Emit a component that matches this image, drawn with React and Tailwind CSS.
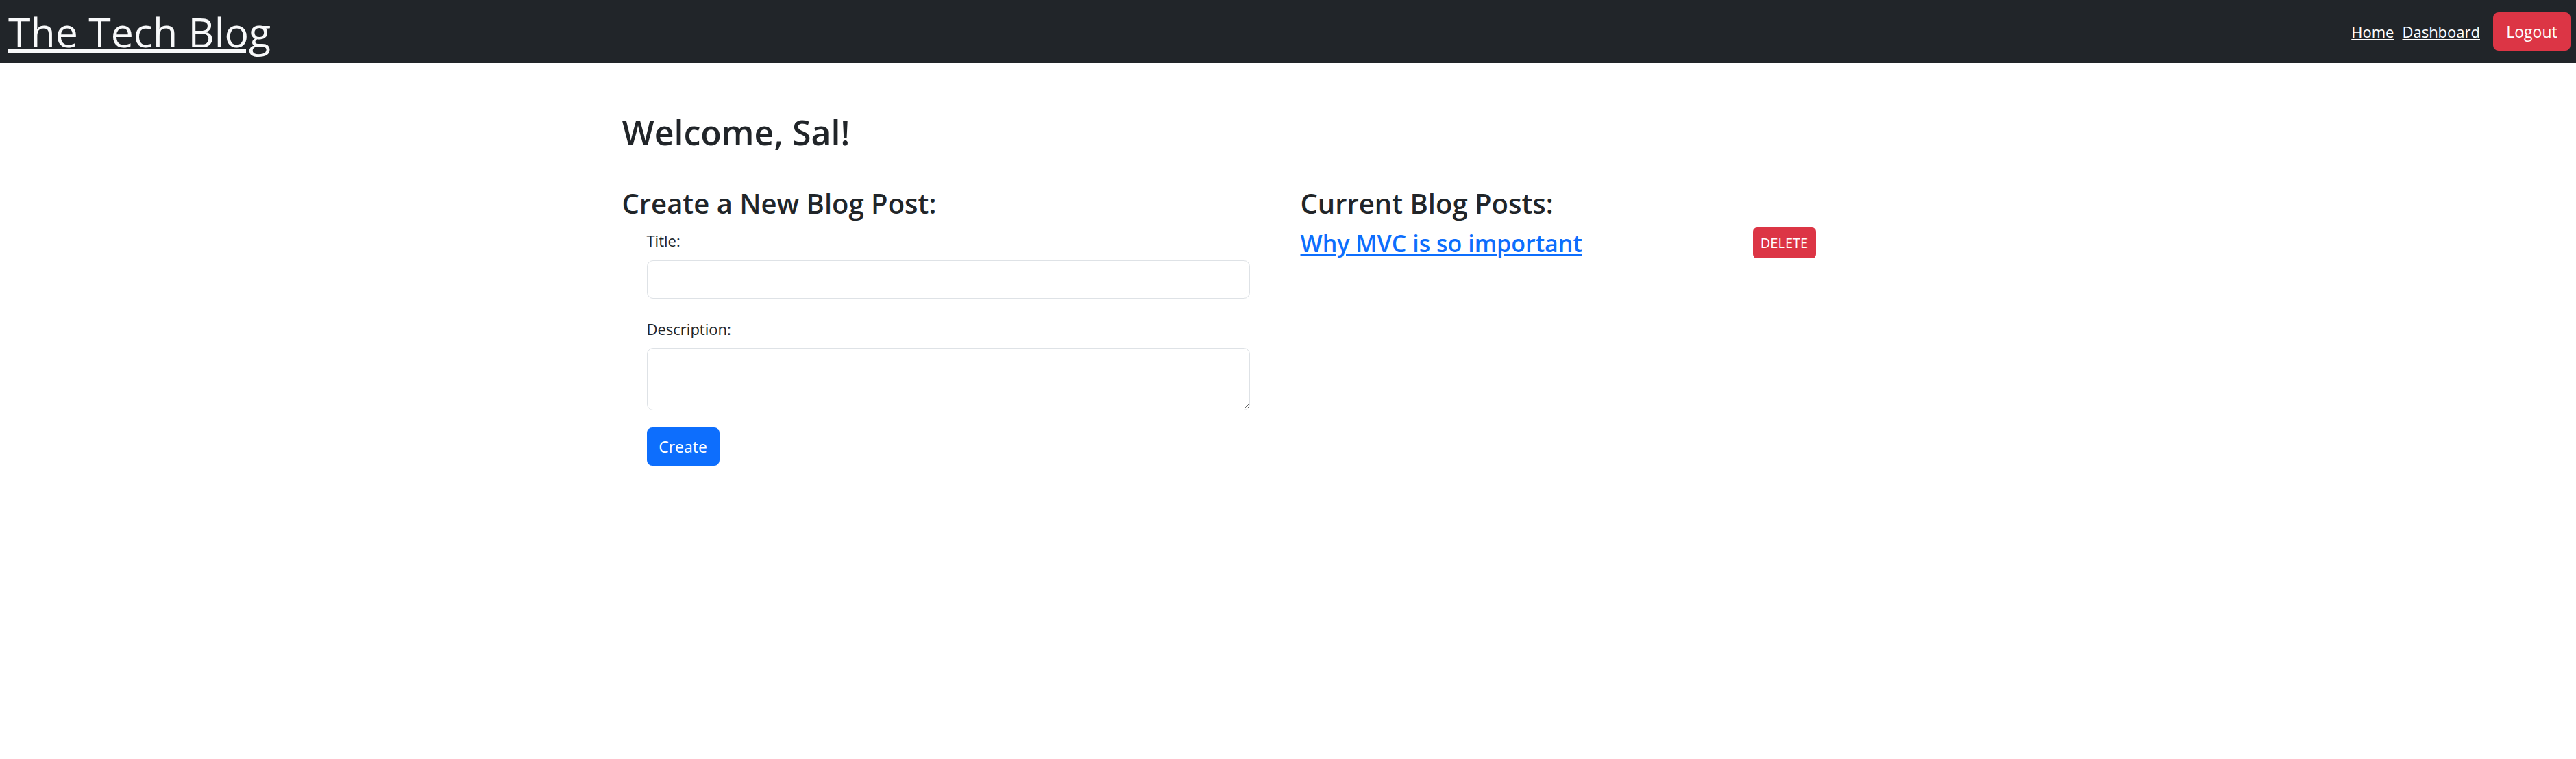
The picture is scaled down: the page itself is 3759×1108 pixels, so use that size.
export default function App() {
  return (
    <div className="min-h-screen bg-white font-['Open_Sans',sans-serif] text-[#212529]">
      <nav className="flex h-[92px] items-center justify-between bg-[#212529] pl-[12px] pr-[8px]">
        <a
          href="#"
          className="text-[59px] leading-none text-[#f8f9fa] underline decoration-[5px] underline-offset-[3px]"
        >
          The Tech Blog
        </a>
        <div className="flex items-center">
          <a href="#" className="mr-[12px] text-[22px] leading-none text-white underline">
            Home
          </a>
          <a href="#" className="mr-[19px] text-[22px] leading-none text-white underline">
            Dashboard
          </a>
          <button className="h-[56px] w-[113px] rounded-[8px] bg-[#dc3545] text-[23px] leading-none text-white">
            Logout
          </button>
        </div>
      </nav>

      <main className="mx-auto grid w-[1980px] grid-cols-2 pt-[75.5px]">
        <h2 className="col-span-2 px-[18px] text-[50px] font-semibold leading-none">Welcome, Sal!</h2>

        <section className="mt-[59px] px-[18px]">
          <h3 className="text-[40px] font-semibold leading-none">Create a New Blog Post:</h3>
          <form className="ml-[36px] w-[880px]" onSubmit={(e) => e.preventDefault()}>
            <label htmlFor="post-title" className="mt-[23px] block text-[22px] leading-none">
              Title:
            </label>
            <input
              id="post-title"
              type="text"
              className="mt-[18.5px] block h-[56px] w-full rounded-[9px] border border-[#dee2e6] bg-white px-[18px] text-[24px]"
            />
            <label htmlFor="post-description" className="mt-[32.5px] block text-[22px] leading-none">
              Description:
            </label>
            <textarea
              id="post-description"
              className="mt-[17.5px] block h-[91px] w-full rounded-[9px] border border-[#dee2e6] bg-white px-[18px] py-[9px] text-[24px]"
            />
            <button
              type="submit"
              className="mt-[25px] h-[56px] w-[106px] rounded-[8px] bg-[#0d6efd] text-[23px] leading-none text-white"
            >
              Create
            </button>
          </form>
        </section>

        <section className="mt-[59px] px-[18px]">
          <h3 className="text-[40px] font-semibold leading-none">Current Blog Posts:</h3>
          <div className="mt-[15.5px] flex h-[45px] w-[752px] items-center justify-between">
            <a
              href="#"
              className="text-[34px] font-semibold leading-none text-[#0d6efd] underline decoration-[3px] underline-offset-[3px]"
            >
              Why MVC is so important
            </a>
            <button className="h-[45px] w-[92px] rounded-[6px] bg-[#dc3545] text-[20px] uppercase leading-none text-white">
              Delete
            </button>
          </div>
        </section>
      </main>
    </div>
  );
}
